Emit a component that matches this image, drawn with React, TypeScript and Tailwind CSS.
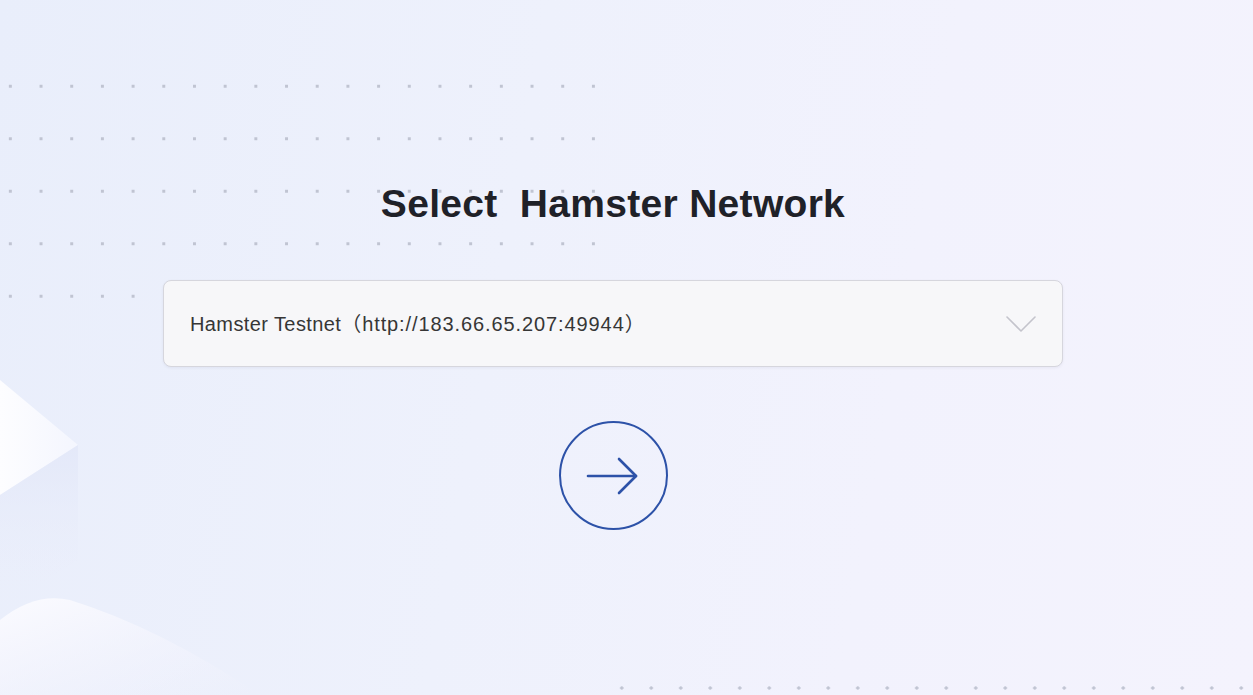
function Dots({ className }: { className: string }) {
  return (
    <div
      className={
        "pointer-events-none absolute bg-[radial-gradient(circle,#c0c4d2_1.4px,transparent_1.9px)] " +
        className
      }
    />
  )
}

function Backdrop() {
  return (
    <div className="pointer-events-none absolute inset-0 overflow-hidden">
      <svg className="absolute left-0 top-0" width="1253" height="695" viewBox="0 0 1253 695">
        <defs>
          <linearGradient id="face" x1="0" y1="0" x2="0" y2="1">
            <stop offset="0" stopColor="#e2e7f8" />
            <stop offset="1" stopColor="#eceffb" stopOpacity="0" />
          </linearGradient>
          <linearGradient id="top" x1="0" y1="0" x2="1" y2="0">
            <stop offset="0" stopColor="#fdfdff" />
            <stop offset="1" stopColor="#f4f6fe" />
          </linearGradient>
          <linearGradient id="wave" x1="0" y1="0" x2="1" y2="1">
            <stop offset="0" stopColor="#fbfbff" />
            <stop offset="1" stopColor="#f4f3fd" stopOpacity="0" />
          </linearGradient>
        </defs>
        <path d="M0 380 L78 445 L0 495 Z" fill="url(#top)" />
        <path d="M0 495 L78 445 L78 560 L0 610 Z" fill="url(#face)" opacity="0.8" />
        <path d="M0 620 Q35 592 70 600 Q160 628 260 695 L0 695 Z" fill="url(#wave)" />
      </svg>
      <Dots className="left-[-5px] top-[60px] h-[210px] w-[620px] bg-[size:30.7px_52.5px]" />
      <Dots className="left-[-5px] top-[270px] h-[30px] w-[140px] bg-[size:30.7px_52.5px]" />
      <Dots className="left-[607px] top-[673px] h-[30px] w-[660px] bg-[size:29.5px_30px]" />
    </div>
  )
}

export default function App() {
  return (
    <div className="relative h-[695px] w-[1253px] overflow-hidden bg-[linear-gradient(100deg,#e9eefb_0%,#eef1fc_40%,#f2f2fd_70%,#f4f3fd_100%)] font-['Liberation_Sans','Noto_Sans_CJK_SC',sans-serif]">
      <Backdrop />
      <div className="relative flex flex-col items-center pr-[27px] pt-[180px]">
        <h1 className="text-[39px] font-bold leading-[48px] tracking-[0.3px] text-[#1f2128] whitespace-pre">
          Select  Hamster Network
        </h1>
        <button className="mt-[52px] flex h-[87px] w-[900px] items-center justify-between rounded-[8px] border border-[#d6d6dd] bg-[#f7f7f9] pl-[26px] pr-[26px] shadow-[0_1px_3px_rgba(40,40,80,0.06)]">
          <span className="text-[20px] text-[#363636]">
            <span className="tracking-[0.4px]">Hamster Testnet</span>
            <span className="tracking-[0.9px]">（http://183.66.65.207:49944）</span>
          </span>
          <svg width="30" height="18" viewBox="0 0 30 18" fill="none" stroke="#c4c4cc" strokeWidth="1.6" strokeLinecap="round" strokeLinejoin="round">
            <path d="M1 2 L15 16 L29 2" />
          </svg>
        </button>
        <button className="mt-[54px] flex h-[109px] w-[109px] items-center justify-center rounded-full border-2 border-[#2d52a8]">
          <svg width="56" height="40" viewBox="0 0 56 40" fill="none" stroke="#2d52a8" strokeWidth="2.6" strokeLinecap="round" strokeLinejoin="round">
            <path d="M3 20 H51" />
            <path d="M34 3 L51 20 L34 37" />
          </svg>
        </button>
      </div>
    </div>
  )
}
